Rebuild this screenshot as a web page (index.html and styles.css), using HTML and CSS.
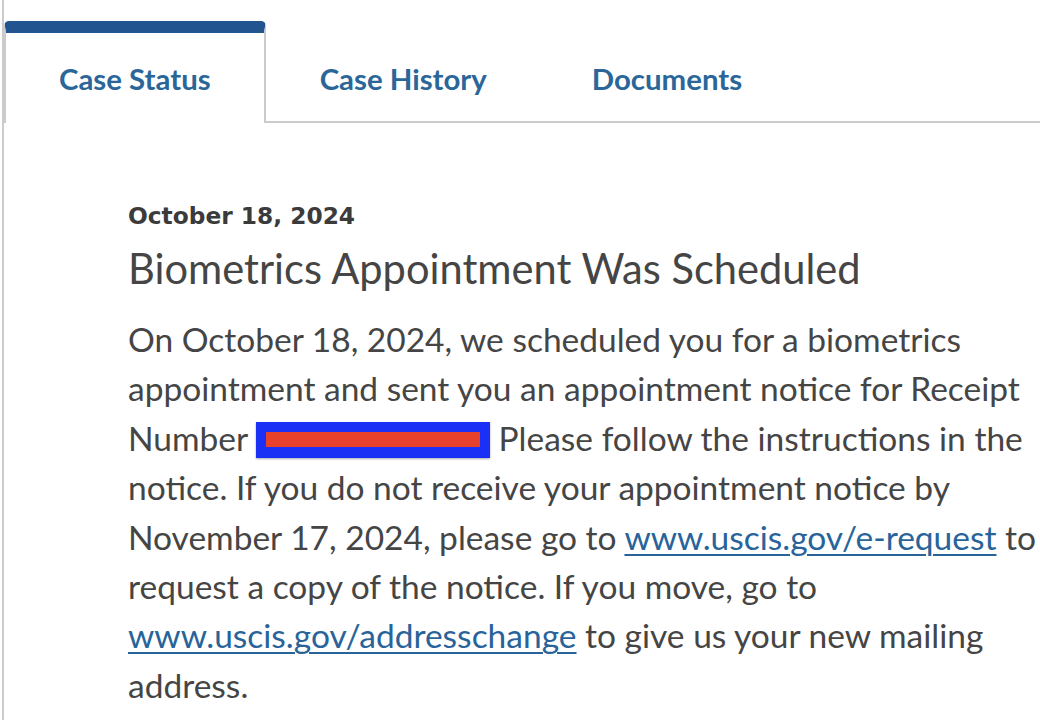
FILE: index.html
```html
<!DOCTYPE html>
<html lang="en">
<head>
<meta charset="utf-8">
<title>Case Status</title>
<link rel="stylesheet" href="styles.css">
</head>
<body>
<div class="page">
  <nav class="tabs">
    <a class="tab tab-active" href="#">Case Status</a>
    <a class="tab" href="#">Case History</a>
    <a class="tab" href="#">Documents</a>
  </nav>
  <section class="status">
    <div class="status-date">October 18, 2024</div>
    <h1 class="status-title">Biometrics Appointment Was Scheduled</h1>
    <p class="status-body">On October 18, 2024, we scheduled you for a biometrics appointment and sent you an appointment notice for Receipt Number <span class="redact"><span class="redact-bar"></span></span> Please follow the instructions in the notice. If you do not receive your appointment notice by November 17, 2024, please go to <a class="link" href="#">www.uscis.gov/e-request</a> to request a copy of the notice. If you move, go to <a class="link" href="#">www.uscis.gov/addresschange</a> to give us your new mailing address.</p>
  </section>
</div>
</body>
</html>
```
FILE: styles.css
```css
html, body {
  margin: 0;
  padding: 0;
  background: #ffffff;
}

body {
  font-family: "Lato", "Liberation Sans", sans-serif;
  color: #454545;
  overflow: hidden;
}

.page {
  margin-left: 2px;
  border-left: 2px solid #cbcbcb;
  min-height: 720px;
  padding-top: 21px;
  box-sizing: border-box;
}

.tabs {
  display: flex;
  border-bottom: 2px solid #cbcbcb;
}

.tab {
  display: flex;
  align-items: center;
  height: 90px;
  padding: 0 49px 0 52px;
  border-top: 12px solid transparent;
  border-left: 2px solid transparent;
  border-right: 2px solid transparent;
  border-radius: 5px 5px 0 0;
  margin-bottom: -2px;
  font-size: 29.4px;
  font-weight: 700;
  color: #2b6698;
  text-decoration: none;
  background: transparent;
}

.tab-active {
  padding: 0 53px;
  border-top-color: #225490;
  border-left-color: #cbcbcb;
  border-right-color: #cbcbcb;
  background: #ffffff;
}

.status {
  padding: 79px 0 0 124px;
}

.status-date {
  font-family: "DejaVu Sans", "Lato", sans-serif;
  font-weight: 700;
  font-size: 23.3px;
  line-height: 28px;
  color: #3b3b3b;
}

.status-title {
  margin: 14px 0 0;
  font-weight: 400;
  font-size: 41.6px;
  line-height: 1.2;
  color: #454545;
}

.status-body {
  margin: 21px 0 0;
  font-size: 33.5px;
  line-height: 49.4px;
}

.link {
  color: #28649a;
  text-decoration: underline;
  text-decoration-thickness: 2px;
  text-underline-offset: 4px;
}

.redact {
  display: inline-block;
  box-sizing: border-box;
  width: 234px;
  height: 36px;
  padding: 10px 10px 11px;
  background: #1a31f5;
  box-shadow: 0 1px 2px rgba(0, 0, 0, 0.35);
  vertical-align: -7px;
}

.redact-bar {
  display: block;
  height: 15px;
  background: #e7402b;
}
```
